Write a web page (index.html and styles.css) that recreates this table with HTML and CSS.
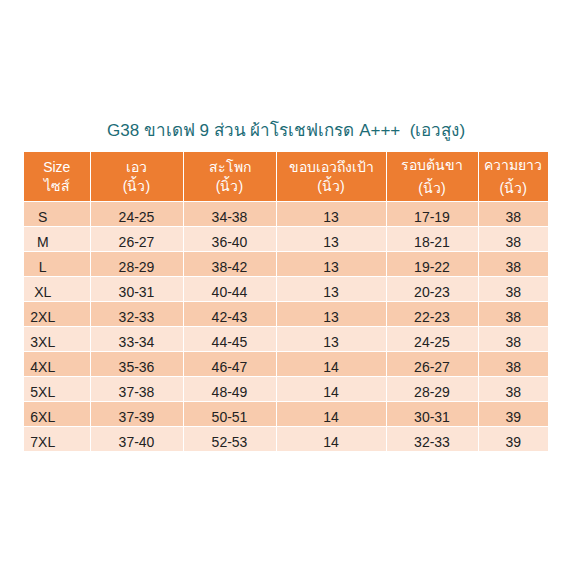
FILE: index.html
```html
<!DOCTYPE html>
<html lang="th">
  <head>
    <meta charset="UTF-8" />
    <meta name="viewport" content="width=device-width, initial-scale=1.0" />
    <title>G38 ขาเดฟ 9 ส่วน</title>
    <link rel="stylesheet" href="styles.css">
  </head>

  <body>
    <div class="sheet">
      <h1 class="title">G38 ขาเดฟ 9 ส่วน ผ้าโรเชฟเกรด A+++ &nbsp;(เอวสูง)</h1>

      <table class="size-table">
        <colgroup>
          <col class="c-size" />
          <col class="c-waist" />
          <col class="c-hip" />
          <col class="c-rise" />
          <col class="c-thigh" />
          <col class="c-length" />
        </colgroup>
        <thead>
          <tr>
            <th>Size<br />ไซส์</th>
            <th>เอว<br />(นิ้ว)</th>
            <th>สะโพก<br />(นิ้ว)</th>
            <th>ขอบเอวถึงเป้า<br />(นิ้ว)</th>
            <th>รอบต้นขา<br /><span class="low">(นิ้ว)</span></th>
            <th>ความยาว<br /><span class="low">(นิ้ว)</span></th>
          </tr>
        </thead>
        <tbody>
          <tr><td class="size">S</td><td>24-25</td><td>34-38</td><td>13</td><td>17-19</td><td>38</td></tr>
          <tr><td class="size">M</td><td>26-27</td><td>36-40</td><td>13</td><td>18-21</td><td>38</td></tr>
          <tr><td class="size">L</td><td>28-29</td><td>38-42</td><td>13</td><td>19-22</td><td>38</td></tr>
          <tr><td class="size">XL</td><td>30-31</td><td>40-44</td><td>13</td><td>20-23</td><td>38</td></tr>
          <tr><td class="size">2XL</td><td>32-33</td><td>42-43</td><td>13</td><td>22-23</td><td>38</td></tr>
          <tr><td class="size">3XL</td><td>33-34</td><td>44-45</td><td>13</td><td>24-25</td><td>38</td></tr>
          <tr><td class="size">4XL</td><td>35-36</td><td>46-47</td><td>14</td><td>26-27</td><td>38</td></tr>
          <tr><td class="size">5XL</td><td>37-38</td><td>48-49</td><td>14</td><td>28-29</td><td>38</td></tr>
          <tr><td class="size">6XL</td><td>37-39</td><td>50-51</td><td>14</td><td>30-31</td><td>39</td></tr>
          <tr><td class="size">7XL</td><td>37-40</td><td>52-53</td><td>14</td><td>32-33</td><td>39</td></tr>
        </tbody>
      </table>
    </div>
  </body>
</html>
```

FILE: styles.css
```css
body {
  margin: 0;
  background-color: #fff;
  font-family: "Liberation Sans", "Noto Sans", sans-serif;
}

.sheet {
  width: 524px;
  padding: 120px 0 0 24px;
}

.title {
  margin: 0 0 10px;
  height: 22px;
  text-align: center;
  font-size: 17px;
  font-weight: normal;
  line-height: 22px;
  color: #1c6c76;
}

.size-table {
  width: 524px;
  border-collapse: collapse;
  table-layout: fixed;
  font-size: 14px;
  color: #222;
}

.c-size {
  width: 66px;
}
.c-waist {
  width: 93px;
}
.c-hip {
  width: 93px;
}
.c-rise {
  width: 110px;
}
.c-thigh {
  width: 92px;
}
.c-length {
  width: 70px;
}

th,
td {
  border: 1px solid #fff;
  padding: 0;
  text-align: center;
}

th {
  height: 49px;
  background-color: #ed7d31;
  color: #fff;
  font-weight: normal;
  line-height: 19px;
}

th .low {
  display: inline-block;
  margin-top: 4px;
}

/* text sits low in the cell, like a spreadsheet */
td {
  height: 17px;
  padding-top: 7px;
  line-height: 17px;
}

.size {
  padding-right: 28px;
}

tbody tr:nth-of-type(odd) {
  background-color: #f8cbad;
}

tbody tr:nth-of-type(even) {
  background-color: #fce4d6;
}

th:first-child,
td:first-child {
  border-left: 0;
}

th:last-child,
td:last-child {
  border-right: 0;
}

thead th {
  border-top: 0;
}

tbody tr:last-child td {
  border-bottom: 0;
}
```
